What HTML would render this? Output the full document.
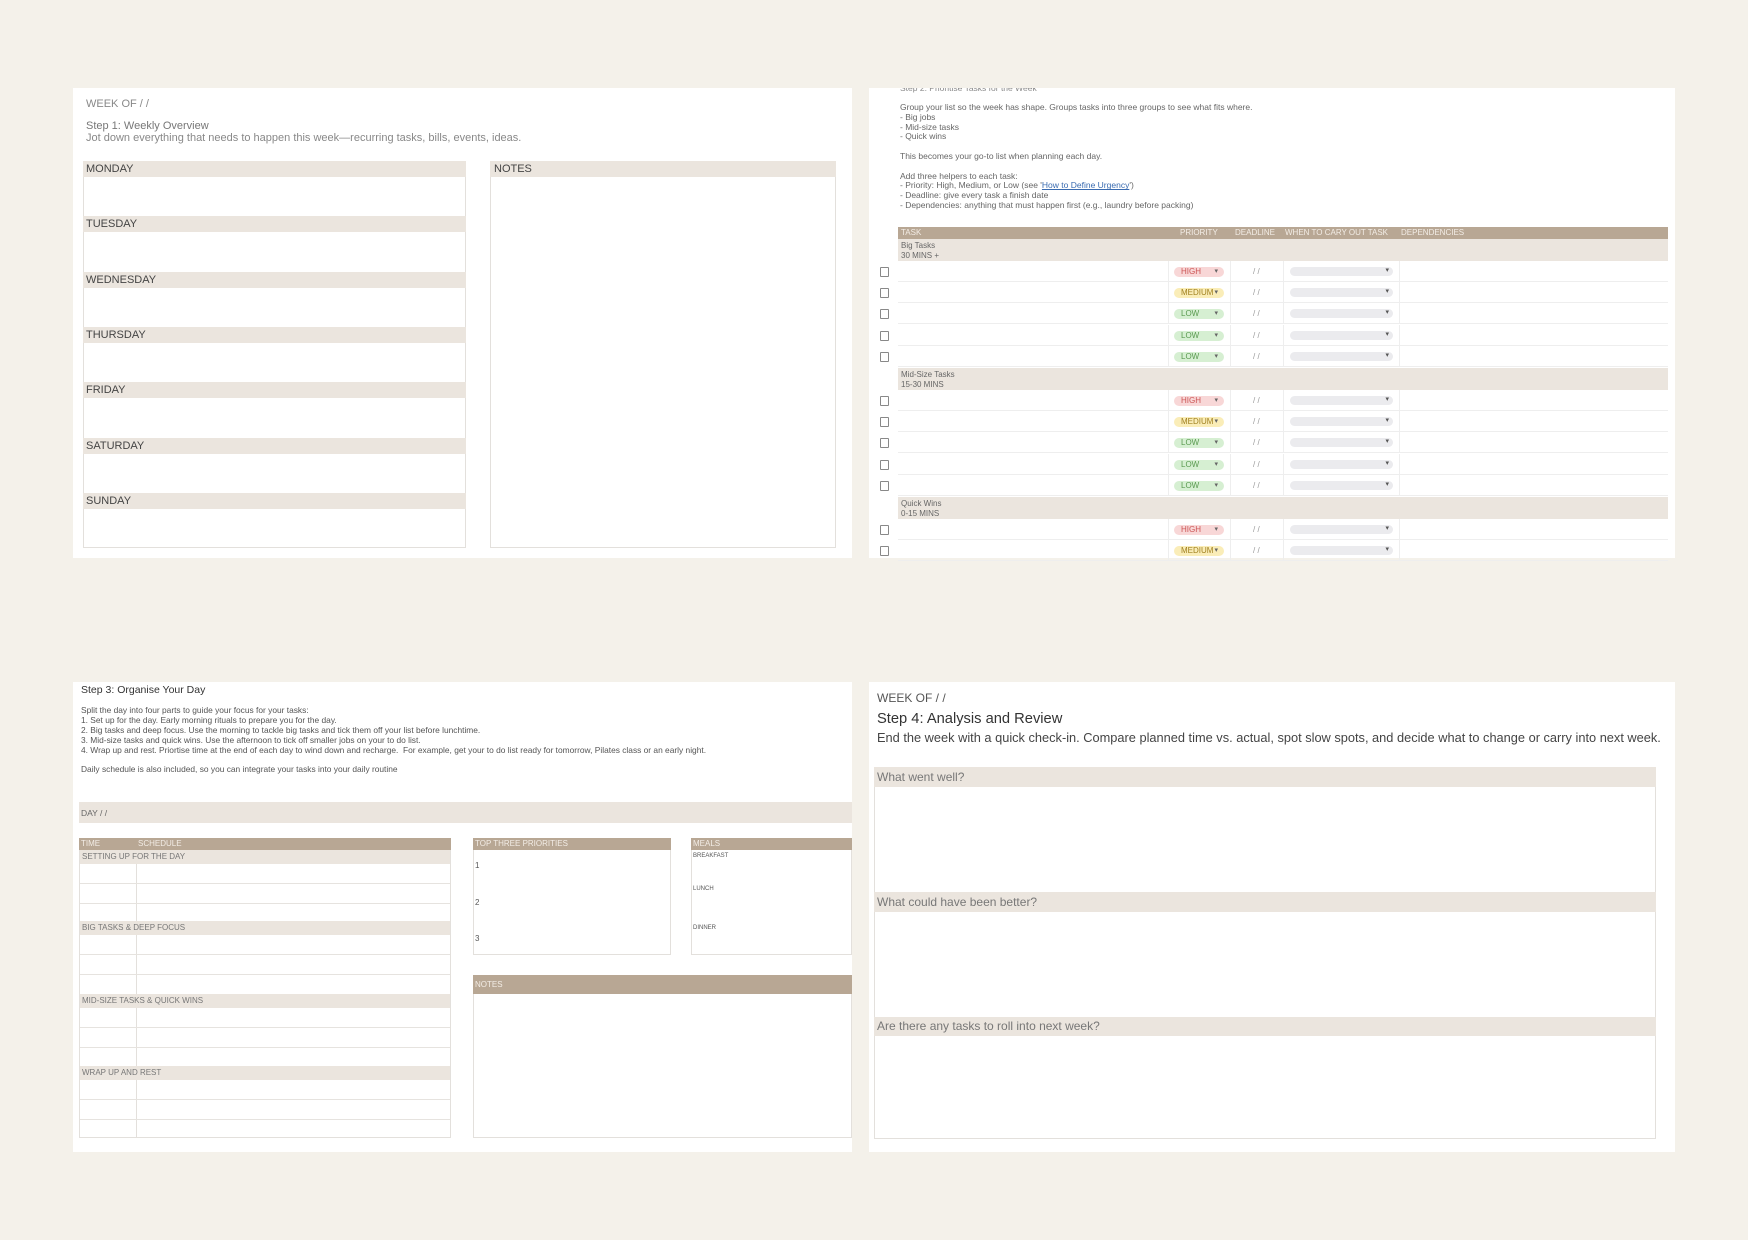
<!DOCTYPE html>
<html><head><meta charset="utf-8"><style>
*{margin:0;padding:0;box-sizing:border-box}
body{width:1748px;height:1240px;background:#f4f1ea;position:relative;overflow:hidden;font-family:"Liberation Sans",sans-serif;color:#555}
.a{position:absolute}
.p{background:#fff;position:absolute}
.t{position:absolute;white-space:nowrap}
.bh{background:#ebe5de}
.br{background:#b8a794;color:#f3ede6}
.bx{position:absolute;border:1px solid #e3e0dc;background:#fff}
.pill{position:absolute;height:10px;border-radius:5px;font-size:8px;line-height:10px;padding-left:7px;width:50px}
.pill:after{content:"▾";position:absolute;right:6px;font-size:7px;color:#666}
.dd{position:absolute;height:9px;border-radius:5px;background:#ebebee;width:103px}
.dd:after{content:"▾";position:absolute;right:4px;top:-1px;font-size:7px;color:#555}
.cb{position:absolute;width:9px;height:10px;border:1px solid #888;border-radius:1px}
</style></head><body>

<!-- Panel 1 -->
<div class="p" style="left:73px;top:88px;width:779px;height:470px"></div>
<div class="t" style="left:86px;top:98px;font-size:11px;color:#888">WEEK OF / /</div>
<div class="t" style="left:86px;top:120px;font-size:11px;color:#777">Step 1: Weekly Overview</div>
<div class="t" style="left:86px;top:132px;font-size:11px;color:#888">Jot down everything that needs to happen this week—recurring tasks, bills, events, ideas.</div>
<div class="bx" style="left:83px;top:161px;width:383px;height:387px"></div>
<div class="bx" style="left:490px;top:161px;width:346px;height:387px"></div>
<div class="a bh" style="left:490px;top:161px;width:346px;height:16px"></div>
<div class="t" style="left:494px;top:163px;font-size:11px;color:#444">NOTES</div>
<div id="days"></div>

<!-- Panel 2 -->
<div class="p" style="left:869px;top:88px;width:806px;height:470px;overflow:hidden">
<div class="t" style="left:31px;top:-5px;font-size:8.5px;color:#888">Step 2: Prioritise Tasks for the Week</div>
</div>
<div class="a" style="left:900px;top:103px;font-size:8.5px;line-height:9.8px;color:#666;white-space:pre">Group your list so the week has shape. Groups tasks into three groups to see what fits where.
- Big jobs
- Mid-size tasks
- Quick wins

This becomes your go-to list when planning each day.

Add three helpers to each task:
- Priority: High, Medium, or Low (see '<span style="color:#3a6bb0;text-decoration:underline">How to Define Urgency</span>')
- Deadline: give every task a finish date
- Dependencies: anything that must happen first (e.g., laundry before packing)</div>
<div class="a br" style="left:898px;top:227px;width:770px;height:12px;font-size:8px;line-height:12px">
<span class="t" style="left:3px">TASK</span><span class="t" style="left:282px">PRIORITY</span><span class="t" style="left:337px">DEADLINE</span><span class="t" style="left:387px">WHEN TO CARY OUT TASK</span><span class="t" style="left:503px">DEPENDENCIES</span></div>
<div id="tbl"></div>

<!-- Panel 3 -->
<div class="p" style="left:73px;top:682px;width:779px;height:470px"></div>
<div class="t" style="left:81px;top:684px;font-size:10.5px;color:#333">Step 3: Organise Your Day</div>
<div class="a" style="left:81px;top:706px;font-size:8.4px;line-height:9.9px;color:#555;white-space:pre">Split the day into four parts to guide your focus for your tasks:
1. Set up for the day. Early morning rituals to prepare you for the day.
2. Big tasks and deep focus. Use the morning to tackle big tasks and tick them off your list before lunchtime.
3. Mid-size tasks and quick wins. Use the afternoon to tick off smaller jobs on your to do list.
4. Wrap up and rest. Priortise time at the end of each day to wind down and recharge.  For example, get your to do list ready for tomorrow, Pilates class or an early night.

Daily schedule is also included, so you can integrate your tasks into your daily routine</div>
<div class="a bh" style="left:79px;top:802px;width:773px;height:21px"></div>
<div class="t" style="left:81px;top:808px;font-size:8.5px;color:#666">DAY / /</div>
<div class="bx" style="left:79px;top:838px;width:372px;height:300px"></div>
<div class="a" style="left:136px;top:838px;width:1px;height:300px;background:#e3e0dc"></div>
<div class="a br" style="left:79px;top:838px;width:372px;height:12px;font-size:8px;line-height:12px"><span class="t" style="left:2px">TIME</span><span class="t" style="left:59px">SCHEDULE</span></div>
<div id="sched"></div>
<div class="bx" style="left:473px;top:838px;width:198px;height:117px"></div>
<div class="a br" style="left:473px;top:838px;width:198px;height:12px;font-size:8px;line-height:12px;padding-left:2px">TOP THREE PRIORITIES</div>
<div class="t" style="left:475px;top:861px;font-size:8px">1</div>
<div class="t" style="left:475px;top:898px;font-size:8px">2</div>
<div class="t" style="left:475px;top:934px;font-size:8px">3</div>
<div class="bx" style="left:691px;top:838px;width:161px;height:117px"></div>
<div class="a br" style="left:691px;top:838px;width:161px;height:12px;font-size:8px;line-height:12px;padding-left:2px">MEALS</div>
<div class="t" style="left:693px;top:853px;font-size:6px">BREAKFAST</div>
<div class="t" style="left:693px;top:886px;font-size:6px">LUNCH</div>
<div class="t" style="left:693px;top:925px;font-size:6px">DINNER</div>
<div class="bx" style="left:473px;top:975px;width:379px;height:163px"></div>
<div class="a br" style="left:473px;top:975px;width:379px;height:19px;font-size:8px;line-height:19px;padding-left:2px">NOTES</div>

<!-- Panel 4 -->
<div class="p" style="left:869px;top:682px;width:806px;height:470px"></div>
<div class="t" style="left:877px;top:691px;font-size:12px;color:#555">WEEK OF / /</div>
<div class="t" style="left:877px;top:711px;font-size:14.7px;color:#333">Step 4: Analysis and Review</div>
<div class="t" style="left:877px;top:730px;font-size:12.8px;color:#444">End the week with a quick check-in. Compare planned time vs. actual, spot slow spots, and decide what to change or carry into next week.</div>
<div class="bx" style="left:874px;top:767px;width:782px;height:372px"></div>
<div class="a bh" style="left:874px;top:767px;width:782px;height:20px"></div>
<div class="t" style="left:877px;top:770px;font-size:12px;color:#777">What went well?</div>
<div class="a bh" style="left:874px;top:892px;width:782px;height:20px"></div>
<div class="t" style="left:877px;top:895px;font-size:12px;color:#777">What could have been better?</div>
<div class="a bh" style="left:874px;top:1017px;width:782px;height:19px"></div>
<div class="t" style="left:877px;top:1019px;font-size:12px;color:#777">Are there any tasks to roll into next week?</div>

<script>
var h='';
['MONDAY','TUESDAY','WEDNESDAY','THURSDAY','FRIDAY','SATURDAY','SUNDAY'].forEach(function(d,i){
var y=161+i*55.3;
h+='<div class="a bh" style="left:83px;top:'+y+'px;width:383px;height:16px"></div><div class="t" style="left:86px;top:'+(y+2)+'px;font-size:11px;color:#444">'+d+'</div>';});
document.getElementById('days').innerHTML=h;

h='';
var groups=[['Big Tasks','30 MINS +',239,['HIGH','MEDIUM','LOW','LOW','LOW']],['Mid-Size Tasks','15-30 MINS',368,['HIGH','MEDIUM','LOW','LOW','LOW']],['Quick Wins','0-15 MINS',497,['HIGH','MEDIUM']]];
var col={HIGH:['#f8d7d7','#c55'],MEDIUM:['#faedb8','#a08020'],LOW:['#d6efd2','#5a9a50']};
groups.forEach(function(g){
var y=g[2];
h+='<div class="a bh" style="left:898px;top:'+y+'px;width:770px;height:22px;font-size:8px;line-height:9.5px;color:#666;padding:2px 3px">'+g[0]+'<br>'+g[1]+'</div>';
y+=22;
g[3].forEach(function(p){
if(y>558)return;
var c=col[p];
h+='<div class="a" style="left:898px;top:'+(y+20)+'px;width:770px;height:1px;background:#eee"></div>';
h+='<div class="a" style="left:1168px;top:'+y+'px;width:1px;height:21px;background:#eee"></div><div class="a" style="left:1230px;top:'+y+'px;width:1px;height:21px;background:#eee"></div><div class="a" style="left:1283px;top:'+y+'px;width:1px;height:21px;background:#eee"></div><div class="a" style="left:1399px;top:'+y+'px;width:1px;height:21px;background:#eee"></div>';
h+='<div class="cb" style="left:880px;top:'+(y+6)+'px"></div>';
h+='<div class="pill" style="left:1174px;top:'+(y+6)+'px;background:'+c[0]+';color:'+c[1]+'">'+p+'</div>';
h+='<div class="t" style="left:1253px;top:'+(y+6)+'px;font-size:8px;color:#999">/ /</div>';
h+='<div class="dd" style="left:1290px;top:'+(y+6)+'px"></div>';
y+=21.2;});
});
document.getElementById('tbl').innerHTML=h;

h='';
[['SETTING UP FOR THE DAY',850],['BIG TASKS &amp; DEEP FOCUS',921],['MID-SIZE TASKS &amp; QUICK WINS',994],['WRAP UP AND REST',1066]].forEach(function(s){
var y=s[1];
h+='<div class="a bh" style="left:80px;top:'+y+'px;width:370px;height:14px;font-size:8px;line-height:14px;padding-left:2px;color:#777">'+s[0]+'</div>';
for(var k=1;k<3;k++)h+='<div class="a" style="left:80px;top:'+(y+14+k*19.3)+'px;width:370px;height:1px;background:#e6e3df"></div>';
});
document.getElementById('sched').innerHTML=h;
</script>
</body></html>
